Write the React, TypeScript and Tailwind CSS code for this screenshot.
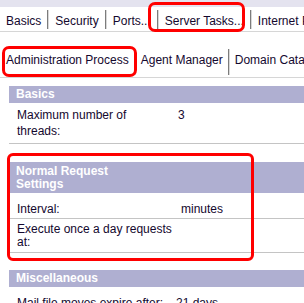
const Sep = ({ h }: { h: string }) => (
  <div className={`flex ${h} self-start mt-[3px]`}>
    <div className="w-px bg-[#7c7c7c]" />
    <div className="w-px bg-[#d8d8d8]" />
  </div>
);

const topTabs = ["Basics", "Security", "Ports...", "Server Tasks...", "Internet Protocols..."];
const subTabs = ["Administration Process", "Agent Manager", "Domain Catalog"];

const App = () => {
  return (
    <div className="relative w-[304px] h-[303px] overflow-hidden bg-white text-[12px] text-[#14082e] font-['Liberation_Sans',Arial,sans-serif]">
      {/* top pattern strip */}
      <div className="h-[7px] bg-[#e4e3ef]" />

      {/* first tab row */}
      <div className="flex h-[25px] border-b border-[#d6d6d6] whitespace-nowrap">
        {topTabs.map((t, i) => (
          <div key={t} className="flex">
            {i > 0 && <Sep h="h-[19px]" />}
            <div className="px-[6px] pt-[7px] leading-[14px]">{t}</div>
          </div>
        ))}
      </div>

      {/* second tab row */}
      <div className="flex h-[32px] mt-[14px] border-b border-[#d6d6d6] whitespace-nowrap">
        {subTabs.map((t, i) => (
          <div key={t} className="flex">
            {i > 0 && <Sep h="h-[26px]" />}
            <div className="px-[5px] pt-[7px] leading-[14px] first:pl-[6px]">{t}</div>
          </div>
        ))}
      </div>

      <div className="pl-[9px]">
        {/* Basics */}
        <div className="mt-[8px] h-[17px] pl-[7px] leading-[17px] bg-[#afafd1] text-white font-bold">Basics</div>
        <div className="flex border-b border-[#c4c4c4] pt-[4px] pb-[4px] leading-[16px]">
          <div className="w-[169px] pl-[8px] pr-[8px]">Maximum number of threads:</div>
          <div>3</div>
        </div>

        {/* Normal Request Settings */}
        <div className="mt-[18px] pl-[7px] pt-[3px] pb-[2px] leading-[13px] bg-[#afafd1] text-white font-bold">
          Normal Request
          <br />
          Settings
        </div>
        <div className="flex border-b border-[#c4c4c4] pt-[9px] pb-[2px] leading-[14px]">
          <div className="w-[172px] pl-[8px]">Interval:</div>
          <div>minutes</div>
        </div>
        <div className="flex border-b border-[#c4c4c4] pt-[4px] pb-[3px] leading-[13px]">
          <div className="w-[169px] pl-[8px] pr-[4px]">Execute once a day requests at:</div>
          <div />
        </div>

        {/* Miscellaneous */}
        <div className="mt-[17px] h-[17px] pl-[7px] leading-[17px] bg-[#afafd1] text-white font-bold">Miscellaneous</div>
        <div className="flex pt-[9px] leading-[14px] whitespace-nowrap">
          <div className="w-[167px] pl-[8px]">Mail file moves expire after:</div>
          <div>21 days</div>
        </div>
      </div>

      {/* red annotation boxes */}
      <div className="absolute left-[148px] top-[2px] w-[97px] h-[30px] border-[3px] border-[#ff0000] rounded-[7px]" />
      <div className="absolute left-[2px] top-[46px] w-[135px] h-[31px] border-[3px] border-[#ff0000] rounded-[7px]" />
      <div className="absolute left-[7px] top-[153px] w-[247px] h-[108px] border-[3px] border-[#ff0000] rounded-[6px]" />
    </div>
  );
};

export default App;
